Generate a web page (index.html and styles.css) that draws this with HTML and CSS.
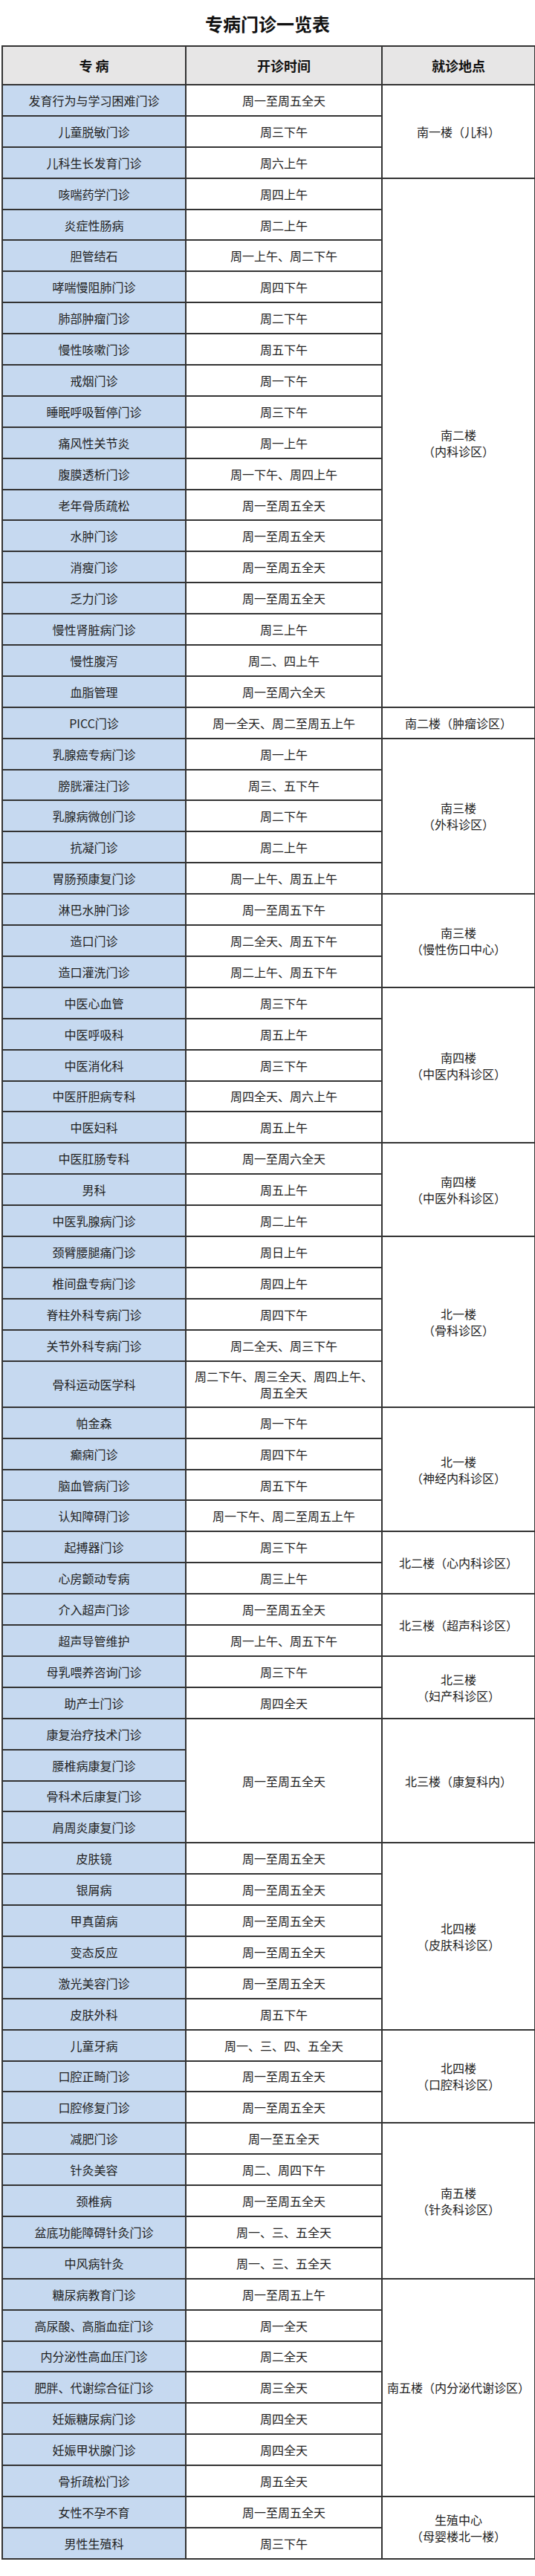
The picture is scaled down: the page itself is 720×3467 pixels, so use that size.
FILE: index.html
```html
<!DOCTYPE html>
<html lang="zh-CN">
<head>
<meta charset="utf-8">
<title>专病门诊一览表</title>
<link rel="stylesheet" href="styles.css">
</head>
<body>
<h1 class="title">专病门诊一览表</h1>
<table class="clinic">
<colgroup><col class="c1"><col class="c2"><col class="c3"></colgroup>
<thead>
<tr><th>专 病</th><th>开诊时间</th><th>就诊地点</th></tr>
</thead>
<tbody>
<tr><td class="name">发育行为与学习困难门诊</td><td>周一至周五全天</td><td rowspan="3">南一楼（儿科）</td></tr>
<tr><td class="name">儿童脱敏门诊</td><td>周三下午</td></tr>
<tr><td class="name">儿科生长发育门诊</td><td>周六上午</td></tr>
<tr><td class="name">咳喘药学门诊</td><td>周四上午</td><td rowspan="17">南二楼<br>（内科诊区）</td></tr>
<tr><td class="name">炎症性肠病</td><td>周二上午</td></tr>
<tr><td class="name">胆管结石</td><td>周一上午、周二下午</td></tr>
<tr><td class="name">哮喘慢阻肺门诊</td><td>周四下午</td></tr>
<tr><td class="name">肺部肿瘤门诊</td><td>周二下午</td></tr>
<tr><td class="name">慢性咳嗽门诊</td><td>周五下午</td></tr>
<tr><td class="name">戒烟门诊</td><td>周一下午</td></tr>
<tr><td class="name">睡眠呼吸暂停门诊</td><td>周三下午</td></tr>
<tr><td class="name">痛风性关节炎</td><td>周一上午</td></tr>
<tr><td class="name">腹膜透析门诊</td><td>周一下午、周四上午</td></tr>
<tr><td class="name">老年骨质疏松</td><td>周一至周五全天</td></tr>
<tr><td class="name">水肿门诊</td><td>周一至周五全天</td></tr>
<tr><td class="name">消瘦门诊</td><td>周一至周五全天</td></tr>
<tr><td class="name">乏力门诊</td><td>周一至周五全天</td></tr>
<tr><td class="name">慢性肾脏病门诊</td><td>周三上午</td></tr>
<tr><td class="name">慢性腹泻</td><td>周二、四上午</td></tr>
<tr><td class="name">血脂管理</td><td>周一至周六全天</td></tr>
<tr><td class="name">PICC门诊</td><td>周一全天、周二至周五上午</td><td>南二楼（肿瘤诊区）</td></tr>
<tr><td class="name">乳腺癌专病门诊</td><td>周一上午</td><td rowspan="5">南三楼<br>（外科诊区）</td></tr>
<tr><td class="name">膀胱灌注门诊</td><td>周三、五下午</td></tr>
<tr><td class="name">乳腺病微创门诊</td><td>周二下午</td></tr>
<tr><td class="name">抗凝门诊</td><td>周二上午</td></tr>
<tr><td class="name">胃肠预康复门诊</td><td>周一上午、周五上午</td></tr>
<tr><td class="name">淋巴水肿门诊</td><td>周一至周五下午</td><td rowspan="3">南三楼<br>（慢性伤口中心）</td></tr>
<tr><td class="name">造口门诊</td><td>周二全天、周五下午</td></tr>
<tr><td class="name">造口灌洗门诊</td><td>周二上午、周五下午</td></tr>
<tr><td class="name">中医心血管</td><td>周三下午</td><td rowspan="5">南四楼<br>（中医内科诊区）</td></tr>
<tr><td class="name">中医呼吸科</td><td>周五上午</td></tr>
<tr><td class="name">中医消化科</td><td>周三下午</td></tr>
<tr><td class="name">中医肝胆病专科</td><td>周四全天、周六上午</td></tr>
<tr><td class="name">中医妇科</td><td>周五上午</td></tr>
<tr><td class="name">中医肛肠专科</td><td>周一至周六全天</td><td rowspan="3">南四楼<br>（中医外科诊区）</td></tr>
<tr><td class="name">男科</td><td>周五上午</td></tr>
<tr><td class="name">中医乳腺病门诊</td><td>周二上午</td></tr>
<tr><td class="name">颈臂腰腿痛门诊</td><td>周日上午</td><td rowspan="5">北一楼<br>（骨科诊区）</td></tr>
<tr><td class="name">椎间盘专病门诊</td><td>周四上午</td></tr>
<tr><td class="name">脊柱外科专病门诊</td><td>周四下午</td></tr>
<tr><td class="name">关节外科专病门诊</td><td>周二全天、周三下午</td></tr>
<tr class="tall"><td class="name">骨科运动医学科</td><td>周二下午、周三全天、周四上午、<br>周五全天</td></tr>
<tr><td class="name">帕金森</td><td>周一下午</td><td rowspan="4">北一楼<br>（神经内科诊区）</td></tr>
<tr><td class="name">癫痫门诊</td><td>周四下午</td></tr>
<tr><td class="name">脑血管病门诊</td><td>周五下午</td></tr>
<tr><td class="name">认知障碍门诊</td><td>周一下午、周二至周五上午</td></tr>
<tr><td class="name">起搏器门诊</td><td>周三下午</td><td rowspan="2">北二楼（心内科诊区）</td></tr>
<tr><td class="name">心房颤动专病</td><td>周三上午</td></tr>
<tr><td class="name">介入超声门诊</td><td>周一至周五全天</td><td rowspan="2">北三楼（超声科诊区）</td></tr>
<tr><td class="name">超声导管维护</td><td>周一上午、周五下午</td></tr>
<tr><td class="name">母乳喂养咨询门诊</td><td>周三下午</td><td rowspan="2">北三楼<br>（妇产科诊区）</td></tr>
<tr><td class="name">助产士门诊</td><td>周四全天</td></tr>
<tr><td class="name">康复治疗技术门诊</td><td rowspan="4">周一至周五全天</td><td rowspan="4">北三楼（康复科内）</td></tr>
<tr><td class="name">腰椎病康复门诊</td></tr>
<tr><td class="name">骨科术后康复门诊</td></tr>
<tr><td class="name">肩周炎康复门诊</td></tr>
<tr><td class="name">皮肤镜</td><td>周一至周五全天</td><td rowspan="6">北四楼<br>（皮肤科诊区）</td></tr>
<tr><td class="name">银屑病</td><td>周一至周五全天</td></tr>
<tr><td class="name">甲真菌病</td><td>周一至周五全天</td></tr>
<tr><td class="name">变态反应</td><td>周一至周五全天</td></tr>
<tr><td class="name">激光美容门诊</td><td>周一至周五全天</td></tr>
<tr><td class="name">皮肤外科</td><td>周五下午</td></tr>
<tr><td class="name">儿童牙病</td><td>周一、三、四、五全天</td><td rowspan="3">北四楼<br>（口腔科诊区）</td></tr>
<tr><td class="name">口腔正畸门诊</td><td>周一至周五全天</td></tr>
<tr><td class="name">口腔修复门诊</td><td>周一至周五全天</td></tr>
<tr><td class="name">减肥门诊</td><td>周一至五全天</td><td rowspan="5">南五楼<br>（针灸科诊区）</td></tr>
<tr><td class="name">针灸美容</td><td>周二、周四下午</td></tr>
<tr><td class="name">颈椎病</td><td>周一至周五全天</td></tr>
<tr><td class="name">盆底功能障碍针灸门诊</td><td>周一、三、五全天</td></tr>
<tr><td class="name">中风病针灸</td><td>周一、三、五全天</td></tr>
<tr><td class="name">糖尿病教育门诊</td><td>周一至周五上午</td><td rowspan="7">南五楼（内分泌代谢诊区）</td></tr>
<tr><td class="name">高尿酸、高脂血症门诊</td><td>周一全天</td></tr>
<tr><td class="name">内分泌性高血压门诊</td><td>周二全天</td></tr>
<tr><td class="name">肥胖、代谢综合征门诊</td><td>周三全天</td></tr>
<tr><td class="name">妊娠糖尿病门诊</td><td>周四全天</td></tr>
<tr><td class="name">妊娠甲状腺门诊</td><td>周四全天</td></tr>
<tr><td class="name">骨折疏松门诊</td><td>周五全天</td></tr>
<tr><td class="name">女性不孕不育</td><td>周一至周五全天</td><td rowspan="2">生殖中心<br>（母婴楼北一楼）</td></tr>
<tr><td class="name">男性生殖科</td><td>周三下午</td></tr>
</tbody>
</table>
</body>
</html>
```
FILE: styles.css
```css
html, body {
  margin: 0;
  padding: 0;
  background: #ffffff;
}

body {
  font-family: "Noto Sans CJK SC", "Microsoft YaHei", sans-serif;
  color: #222222;
}

.title {
  margin: 0;
  box-sizing: border-box;
  height: 61px;
  padding-top: 20px;
  font-size: 24px;
  line-height: 24px;
  font-weight: 700;
  text-align: center;
  color: #111111;
}

.clinic {
  margin-left: 2px;
  width: 717px;
  border-collapse: collapse;
  table-layout: fixed;
  border: 2px solid #2a2a2a;
}

.c1 { width: 247px; }
.c2 { width: 264px; }
.c3 { width: 206px; }

.clinic th,
.clinic td {
  box-sizing: border-box;
  border: 2px solid #333333;
  padding: 0 4px;
  text-align: center;
  vertical-align: middle;
  font-size: 16px;
  line-height: 22px;
}

.clinic th {
  height: 52px;
  background: #e7e6e6;
  font-size: 18px;
  font-weight: 700;
  color: #111111;
}

.clinic td {
  height: 41.9px;
  background: #ffffff;
}

.clinic td.name {
  background: #c6d9f0;
}

.clinic tr.tall td {
  height: 62.3px;
}
```
